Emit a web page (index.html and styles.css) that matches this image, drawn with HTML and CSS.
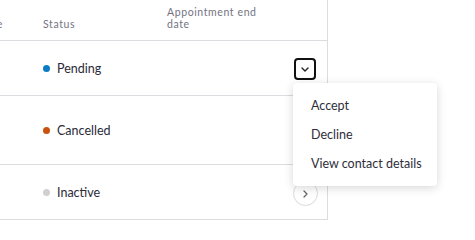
FILE: index.html
```html
<!DOCTYPE html>
<html>
<head>
<meta charset="utf-8">
<link rel="stylesheet" href="styles.css">
</head>
<body>
<div class="page">
  <div class="table">
    <div class="row head">
      <div class="cell c0"><span>Start date</span></div>
      <div class="cell">Status</div>
      <div class="cell"><span class="wrap">Appointment end date</span></div>
      <div class="cell"></div>
    </div>
    <div class="row r1">
      <div class="cell c0"></div>
      <div class="cell"><span class="dot blue"></span>Pending</div>
      <div class="cell"></div>
      <div class="cell act">
        <button class="drop" aria-label="Open actions">
          <svg width="8" height="5" viewBox="0 0 8 5"><path d="M1 1l3 3 3-3" fill="none" stroke="#222" stroke-width="1.4" stroke-linecap="round" stroke-linejoin="round"/></svg>
        </button>
      </div>
    </div>
    <div class="row r2">
      <div class="cell c0"></div>
      <div class="cell"><span class="dot orange"></span>Cancelled</div>
      <div class="cell"></div>
      <div class="cell act"></div>
    </div>
    <div class="row r3">
      <div class="cell c0"></div>
      <div class="cell"><span class="dot grey"></span>Inactive</div>
      <div class="cell"></div>
      <div class="cell act">
        <button class="circle" aria-label="Details">
          <svg width="5" height="8" viewBox="0 0 5 8"><path d="M1 1l3 3-3 3" fill="none" stroke="#666" stroke-width="1.3" stroke-linecap="round" stroke-linejoin="round"/></svg>
        </button>
      </div>
    </div>
  </div>
  <ul class="menu">
    <li>Accept</li>
    <li>Decline</li>
    <li>View contact details</li>
  </ul>
</div>
</body>
</html>
```

FILE: styles.css
```css
html, body {
  margin: 0;
  padding: 0;
  background: #fff;
}
body {
  font-family: "Lato", "Liberation Sans", sans-serif;
  color: #2a2a38;
  overflow: hidden;
}
.page {
  position: relative;
  width: 475px;
  height: 221px;
}
.table {
  width: 327px;
  border-right: 1px solid #dcdce0;
}
.row {
  display: grid;
  grid-template-columns: 43px 124px 1fr 50px;
  border-bottom: 1px solid #dcdce0;
}
.cell {
  display: flex;
  align-items: center;
  font-size: 12.5px;
  white-space: nowrap;
}
.head {
  height: 40px;
}
.head .cell {
  align-items: flex-end;
  padding-bottom: 10px;
  font-size: 10.5px;
  letter-spacing: 0.6px;
  color: #73737f;
  line-height: 12px;
}
.c0 {
  justify-content: flex-end;
  padding-right: 40px;
  overflow: hidden;
}
.wrap {
  white-space: normal;
  max-width: 100px;
}
.r1 { height: 54px; }
.r2 { height: 68px; }
.r3 { height: 54px; }
.dot {
  width: 7px;
  height: 7px;
  border-radius: 50%;
  margin-right: 7px;
  margin-top: 1px;
}
.blue { background: #0a7cc4; }
.orange { background: #c9520e; }
.grey { background: #d0d0d3; }
.act {
  justify-content: flex-start;
  padding-left: 17px;
}
.drop {
  width: 22px;
  height: 22px;
  margin-top: 2px;
  border: 2px solid #111;
  border-radius: 4px;
  background: #fff;
  padding: 0;
  display: flex;
  align-items: center;
  justify-content: center;
}
.circle {
  width: 25px;
  height: 25px;
  margin-top: 3px;
  margin-left: -1px;
  border: 1px solid #dadadd;
  border-radius: 50%;
  background: #fff;
  padding: 0;
  display: flex;
  align-items: center;
  justify-content: center;
}
.menu {
  position: absolute;
  left: 293px;
  top: 83px;
  width: 144px;
  margin: 0;
  padding: 8px 0;
  list-style: none;
  background: #fff;
  border-radius: 4px;
  box-shadow: 0 2px 10px rgba(0, 0, 0, 0.16);
}
.menu li {
  height: 29px;
  line-height: 29px;
  padding-left: 18px;
  font-size: 12.5px;
  color: #2e2e3a;
}
```
